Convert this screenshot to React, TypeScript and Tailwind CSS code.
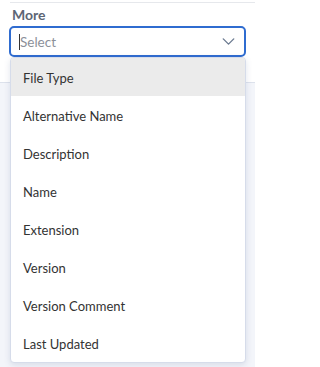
import { ChevronDown } from "lucide-react";

const options = [
  "File Type",
  "Alternative Name",
  "Description",
  "Name",
  "Extension",
  "Version",
  "Version Comment",
  "Last Updated",
];

export default function App() {
  return (
    <div
      className="relative h-[367px] w-[255px] overflow-hidden bg-white"
      style={{ fontFamily: "Lato, 'Open Sans', sans-serif" }}
    >
      <div className="pt-[2px]">
        <div className="ml-[10px] border-t border-[#e6e8ec]" />
        <div className="pl-[9px] pr-[9px]">
          <div className="ml-[3px] mt-[3px] text-[14px] font-bold leading-[18px] text-[#5d6675]">More</div>
          <div className="mt-[2px] flex h-[31px] items-center rounded-[5px] border-2 border-[#2f6cd0] pl-[8px] pr-[5px]">
            <span className="h-[16px] w-px bg-[#333]" />
            <span className="pt-[1px] text-[13.5px] text-[#8c9099]">Select</span>
            <ChevronDown className="ml-auto h-[21px] w-[21px] text-[#6b7a90]" strokeWidth={1.6} />
          </div>
        </div>
        <div className="mt-[25px] h-[300px] border-t border-[#dde2ec] bg-[#f3f5fa]" />
      </div>

      <ul className="absolute left-[10px] top-[57px] w-[236px] overflow-hidden rounded-[4px] border border-[#d6dcea] bg-white shadow-[0_2px_6px_rgba(60,80,130,0.15)]">
        {options.map((o, i) => (
          <li
            key={o}
            className={`flex h-[38px] items-center pl-[12px] pt-[3px] text-[13px] text-[#333] ${i === 0 ? "bg-[#ebebeb]" : ""}`}
          >
            {o}
          </li>
        ))}
      </ul>
    </div>
  );
}
